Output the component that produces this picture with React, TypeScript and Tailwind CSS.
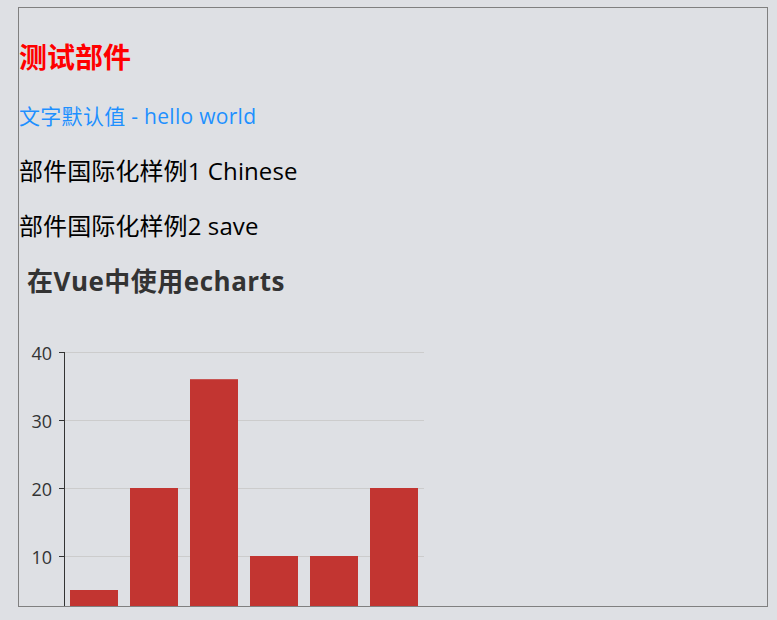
import React from "react";

const bars = [5, 20, 36, 10, 10, 20];
const ticks = [40, 30, 20, 10];
const zeroY = 323;
const unit = 6.8;

function Chart() {
  return (
    <svg width="440" height="330" className="block shrink-0">
      {ticks.map((t) => {
        const y = Math.round(zeroY - t * unit) + 0.5;
        return (
          <g key={t}>
            <line x1="46" x2="405" y1={y} y2={y} stroke="#cccccc" strokeWidth="1" />
            <line x1="40" x2="46" y1={y} y2={y} stroke="#333333" strokeWidth="1" />
            <text
              x="33"
              y={y}
              textAnchor="end"
              dominantBaseline="central"
              fontSize="18"
              fill="#333333"
              fontFamily="'Open Sans', sans-serif"
            >
              {t}
            </text>
          </g>
        );
      })}
      <line x1="45.5" x2="45.5" y1="51" y2="330" stroke="#333333" strokeWidth="1" />
      {bars.map((v, i) => {
        const h = v * unit;
        return <rect key={i} x={51 + i * 60} y={zeroY - h} width="48" height={h} fill="#c23531" />;
      })}
    </svg>
  );
}

export default function App() {
  return (
    <div className="min-h-screen w-full bg-[#dee0e4] pt-[7px] pl-[18px] [font-family:'Open_Sans','Noto_Sans_CJK_SC',sans-serif]">
      <div className="w-[750px] h-[600px] border border-[#808080] overflow-hidden flex flex-col">
        <div className="mt-[29px] h-[40px] leading-[40px] text-[28px] font-bold text-[#ff0000] whitespace-nowrap">
          测试部件
        </div>
        <div className="mt-[19px] h-[40px] leading-[40px] text-[21px] tracking-[0.3px] text-[#1e90ff] whitespace-nowrap">
          文字默认值 - hello world
        </div>
        <div className="mt-[15px] h-[40px] leading-[40px] text-[24px] tracking-[0.1px] text-black whitespace-nowrap">
          部件国际化样例1 Chinese
        </div>
        <div className="mt-[15px] h-[40px] leading-[40px] text-[24px] tracking-[0.1px] text-black whitespace-nowrap">
          部件国际化样例2 save
        </div>
        <div className="mt-[15px] h-[40px] leading-[40px] pl-[8px] text-[26px] tracking-[0.5px] font-bold text-[#333333] whitespace-nowrap">
          在Vue中使用echarts
        </div>
        <Chart />
      </div>
    </div>
  );
}
